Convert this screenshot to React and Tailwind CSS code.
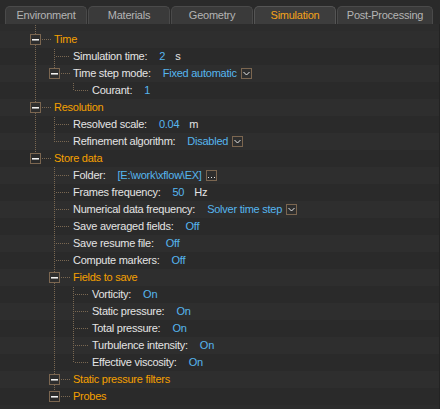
const tabs = ['Environment', 'Materials', 'Geometry', 'Simulation', 'Post-Processing']

const tree = [
  {
    label: 'Time',
    children: [
      { label: 'Simulation time:', value: '2', unit: 's' },
      {
        label: 'Time step mode:',
        value: 'Fixed automatic',
        dropdown: true,
        children: [{ label: 'Courant:', value: '1' }],
      },
    ],
  },
  {
    label: 'Resolution',
    children: [
      { label: 'Resolved scale:', value: '0.04', unit: 'm' },
      { label: 'Refinement algorithm:', value: 'Disabled', dropdown: true },
    ],
  },
  {
    label: 'Store data',
    children: [
      { label: 'Folder:', value: '[E:\\work\\xflow\\EX]', browse: true },
      { label: 'Frames frequency:', value: '50', unit: 'Hz' },
      { label: 'Numerical data frequency:', value: 'Solver time step', dropdown: true },
      { label: 'Save averaged fields:', value: 'Off' },
      { label: 'Save resume file:', value: 'Off' },
      { label: 'Compute markers:', value: 'Off' },
      {
        label: 'Fields to save',
        children: [
          { label: 'Vorticity:', value: 'On' },
          { label: 'Static pressure:', value: 'On' },
          { label: 'Total pressure:', value: 'On' },
          { label: 'Turbulence intensity:', value: 'On' },
          { label: 'Effective viscosity:', value: 'On' },
        ],
      },
      { label: 'Static pressure filters', children: [] },
      { label: 'Probes', children: [] },
    ],
  },
]

// flatten the tree into rows, remembering which ancestor lines carry on
function flatten(nodes, level = 0, guides = [], out = []) {
  nodes.forEach((n, i) => {
    const last = i === nodes.length - 1
    out.push({ ...n, level, guides, last })
    if (n.children && n.children.length) flatten(n.children, level + 1, [...guides, !last], out)
  })
  return out
}

const rows = flatten(tree)
const DOT = '#7a6852'

function Gutter({ level, guides, last, group, odd }) {
  const w = 54 + 19 * level
  const c = 35 + 19 * level
  const off = odd ? 1 : 0
  return (
    <svg width={w - 3} height="17" className="shrink-0">
      {guides.map((g, k) =>
        g ? (
          <line key={k} x1={35 + 19 * k + 0.5} y1="0" x2={35 + 19 * k + 0.5} y2="17"
            stroke={DOT} strokeDasharray="1 1" strokeDashoffset={off} />
        ) : null
      )}
      {group ? (
        <>
          <line x1={c + 0.5} y1="0" x2={c + 0.5} y2="3" stroke={DOT} strokeDasharray="1 1" strokeDashoffset={off} />
          {!last && (
            <line x1={c + 0.5} y1="14" x2={c + 0.5} y2="17" stroke={DOT} strokeDasharray="1 1" strokeDashoffset={off} />
          )}
          <line x1={c + 7} y1="8.5" x2={w - 3} y2="8.5" stroke={DOT} strokeDasharray="1 1" />
          <rect x={c - 4.5} y="3.5" width="10" height="10" fill="none" stroke="#7b6650" />
          <rect x={c - 3} y="8" width="7" height="1" fill="#f2f2f2" />
          <rect x={c - 3} y="9" width="7" height="1" fill="#9a9a9a" />
        </>
      ) : (
        <>
          <line x1={c + 0.5} y1="0" x2={c + 0.5} y2={last ? 9 : 17} stroke={DOT} strokeDasharray="1 1" strokeDashoffset={off} />
          <line x1={c + 2} y1="8.5" x2={w - 3} y2="8.5" stroke={DOT} strokeDasharray="1 1" />
        </>
      )}
    </svg>
  )
}

function DropBox() {
  return (
    <svg width="11" height="11" className="ml-1 shrink-0">
      <rect x="0.5" y="0.5" width="10" height="10" fill="none" stroke="#7b6650" />
      <path d="M2.5 4 L5.5 7 L8.5 4" fill="none" stroke="#e6e6e6" />
    </svg>
  )
}

function BrowseBox() {
  return (
    <svg width="11" height="11" className="ml-1 shrink-0">
      <rect x="0.5" y="0.5" width="10" height="10" fill="none" stroke="#7b6650" />
      <rect x="2" y="7" width="1" height="1" fill="#e6e6e6" />
      <rect x="5" y="7" width="1" height="1" fill="#e6e6e6" />
      <rect x="8" y="7" width="1" height="1" fill="#e6e6e6" />
    </svg>
  )
}

export default function App() {
  return (
    <div className="w-[440px] h-[409px] bg-[#2c2c2c] overflow-hidden text-[11px] tracking-[-0.25px] font-['Liberation_Sans',Arial,sans-serif]">
      <div className="h-6 bg-[#2a2a2a] flex items-end pl-[5px] gap-px">
        {tabs.map(t => {
          const active = t === 'Simulation'
          return (
            <div
              key={t}
              className={`h-[18px] rounded-t-[5px] border border-b-0 flex items-center justify-center ${
                t === 'Post-Processing' ? 'w-[96px]' : 'w-[82px]'
              } ${active ? 'bg-[#3d3d3d] border-[#555] text-[#f5a31a]' : 'bg-[#3a3a3a] border-[#4a4a4a] text-[#b4b4b4]'}`}
            >
              {t}
            </div>
          )
        })}
      </div>
      <div className="border-r border-[#232323] h-[385px]">
        <svg width="40" height="7" className="block">
          <line x1="35.5" y1="1" x2="35.5" y2="7" stroke={DOT} strokeDasharray="1 1" />
        </svg>
        {rows.map((r, i) => {
          const group = !!r.children
          const header = group && !r.value
          return (
            <div key={i} className={`h-[17px] flex items-center ${i % 2 ? 'bg-[#2a2a2a]' : 'bg-[#2e2e2e]'}`}>
              <Gutter level={r.level} guides={r.guides} last={r.last} group={group} odd={i % 2 === 1} />
              <span className={`ml-[3px] whitespace-nowrap ${header ? 'text-[#f5a000]' : 'text-[#e4e4e4]'}`}>{r.label}</span>
              {r.value && <span className="ml-3 whitespace-nowrap text-[#56b6ef]">{r.value}</span>}
              {r.unit && <span className="ml-2.5 text-[#e4e4e4]">{r.unit}</span>}
              {r.dropdown && <DropBox />}
              {r.browse && <BrowseBox />}
            </div>
          )
        })}
      </div>
    </div>
  )
}
